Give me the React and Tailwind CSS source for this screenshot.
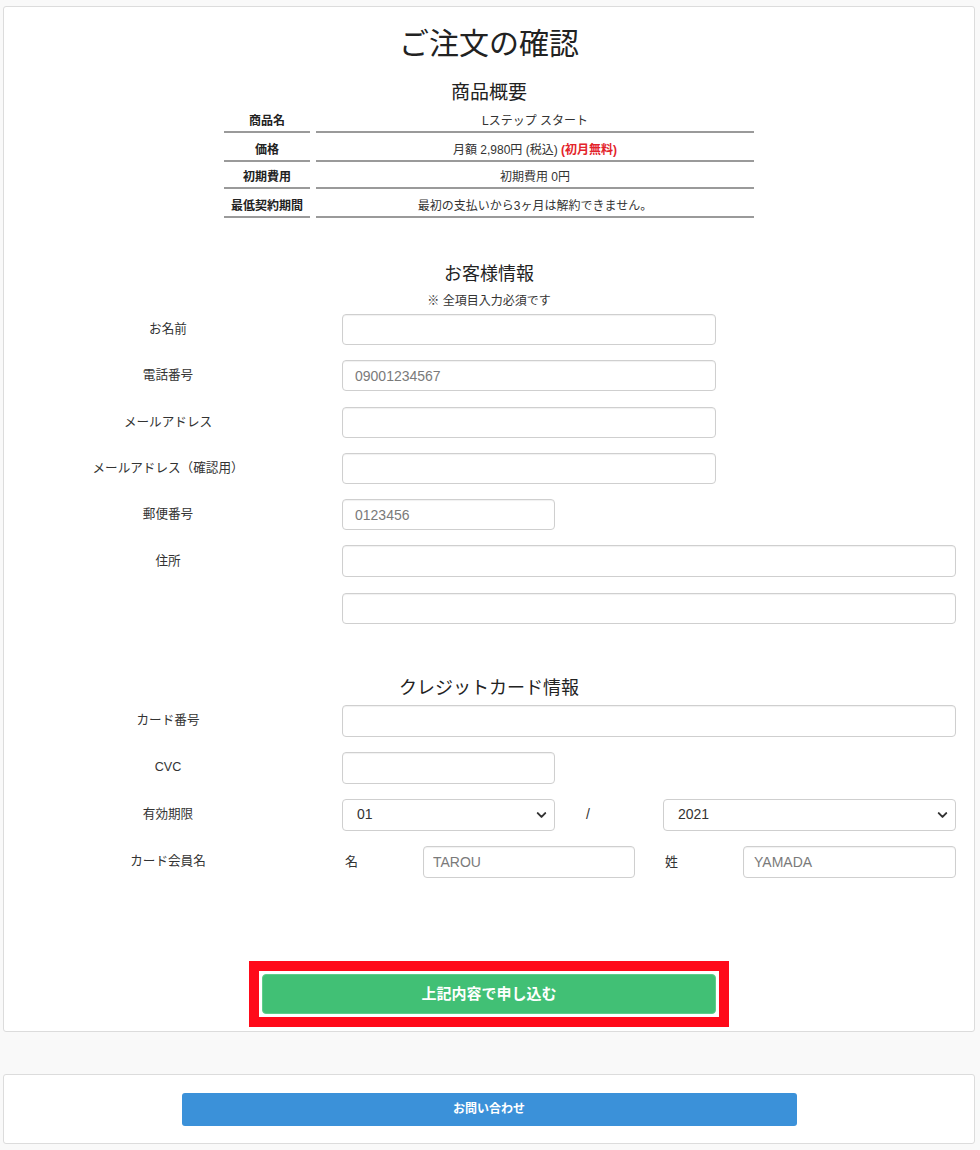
import React from "react"
import { ChevronDown } from "lucide-react"

const font = { fontFamily: '"Liberation Sans", "Noto Sans CJK JP", sans-serif' }

const summary = [
  { label: "商品名", h: "h-[28px]", value: "Lステップ スタート" },
  {
    label: "価格",
    h: "h-[29px]",
    value: (
      <>
        月額 2,980円 (税込) <span className="font-bold text-[#e3242b]">(初月無料)</span>
      </>
    ),
  },
  { label: "初期費用", h: "h-[27px]", value: "初期費用 0円" },
  { label: "最低契約期間", h: "h-[29px]", value: "最初の支払いから3ヶ月は解約できません。" },
]

const inputCls =
  "h-full w-full rounded-[4px] border border-[#cfcfcf] bg-white px-3 text-[14px] text-[#333] placeholder:text-[#7a7a7a] shadow-[inset_0_1px_1px_rgba(0,0,0,0.06)] outline-none"

const Row = ({ label, h = "h-[31px]", children }) => (
  <div className={`flex items-center ${h}`}>
    <div className="w-[328px] text-center text-[12.6px] text-[#333]">{label}</div>
    <div className="ml-[10px] flex h-full w-[614px] items-center">{children}</div>
  </div>
)

const Select = ({ value, w }) => (
  <div className={`relative h-full ${w}`}>
    <select
      defaultValue={value}
      className="h-full w-full appearance-none rounded-[4px] border border-[#cfcfcf] bg-white pl-[14px] text-[14px] text-[#333] outline-none"
    >
      <option>{value}</option>
    </select>
    <ChevronDown
      size={15}
      strokeWidth={3.2}
      className="pointer-events-none absolute right-[6px] top-1/2 -translate-y-1/2 text-[#333]"
    />
  </div>
)

export default function App() {
  return (
    <div className="min-h-[1150px] bg-[#f9f9f9] pt-[6px] pb-[6px]" style={font}>
      <div className="mx-[3px] w-[972px] rounded-[3px] border border-[#dcdcdc] bg-white pt-[19px] pb-[4px]">
        <h1 className="text-center text-[30px] leading-[36px] text-[#222]">ご注文の確認</h1>
        <h2 className="mt-[19px] text-center text-[19px] leading-[24px] text-[#222]">商品概要</h2>

        <div className="mx-auto w-[530px]">
          {summary.map((r) => (
            <div key={r.label} className={`flex gap-[6px] ${r.h}`}>
              <div className="flex w-[86px] items-end justify-center border-b-2 border-[#9a9a9a] pb-[2px] text-[12px] leading-[16px] font-bold text-[#222]">
                {r.label}
              </div>
              <div className="flex flex-1 items-end justify-center border-b-2 border-[#9a9a9a] pb-[2px] text-[12px] leading-[16px] text-[#333]">
                <span>{r.value}</span>
              </div>
            </div>
          ))}
        </div>

        <h2 className="mt-[44px] text-center text-[18px] leading-[24px] text-[#222]">お客様情報</h2>
        <p className="mt-[7px] text-center text-[12px] leading-[16px] text-[#333]">※ 全項目入力必須です</p>

        <div className="mt-[5px] flex flex-col gap-[15.3px]">
          <Row label="お名前">
            <div className="h-full w-[374px]"><input className={inputCls} /></div>
          </Row>
          <Row label="電話番号">
            <div className="h-full w-[374px]"><input className={inputCls} placeholder="09001234567" /></div>
          </Row>
          <Row label="メールアドレス">
            <div className="h-full w-[374px]"><input className={inputCls} /></div>
          </Row>
          <Row label="メールアドレス（確認用）">
            <div className="h-full w-[374px]"><input className={inputCls} /></div>
          </Row>
          <Row label="郵便番号">
            <div className="h-full w-[213px]"><input className={inputCls} placeholder="0123456" /></div>
          </Row>
          <Row label="住所" h="h-[32px]">
            <input className={inputCls} />
          </Row>
          <Row label="" h="h-[31px]">
            <input className={inputCls} />
          </Row>
        </div>

        <h2 className="mt-[52px] text-center text-[18px] leading-[24px] text-[#222]">クレジットカード情報</h2>

        <div className="mt-[5px] flex flex-col gap-[15px]">
          <Row label="カード番号" h="h-[32px]">
            <input className={inputCls} />
          </Row>
          <Row label="CVC" h="h-[32px]">
            <div className="h-full w-[213px]"><input className={inputCls} /></div>
          </Row>
          <Row label="有効期限" h="h-[32px]">
            <Select value="01" w="w-[213px]" />
            <div className="w-[108px] pl-[31px] text-[14px] text-[#333]">/</div>
            <Select value="2021" w="w-[293px]" />
          </Row>
          <Row label="カード会員名" h="h-[32px]">
            <div className="flex h-full w-[293px] items-center">
              <span className="w-[81px] pl-[3px] text-[13px] text-[#333]">名</span>
              <div className="h-full w-[212px]"><input className={`${inputCls} !px-[9px]`} placeholder="TAROU" /></div>
            </div>
            <div className="ml-[28px] flex h-full w-[293px] items-center">
              <span className="w-[80px] pl-[2px] text-[13px] text-[#333]">姓</span>
              <div className="h-full w-[213px]"><input className={`${inputCls} !px-[10px]`} placeholder="YAMADA" /></div>
            </div>
          </Row>
        </div>

        <div className="mx-auto mt-[83px] w-[480px] border-[10px] border-[#ff0a1a] bg-white p-[3px]">
          <button className="flex h-[40px] w-full items-center justify-center rounded-[4px] border border-[#5fce8c] bg-[#41c075] text-[15px] font-bold text-white">
            上記内容で申し込む
          </button>
        </div>
      </div>

      <div className="mx-[3px] mt-[42px] w-[972px] rounded-[3px] border border-[#dcdcdc] bg-white pt-[18px] pb-[17px]">
        <button className="mx-auto flex h-[33px] w-[615px] items-center justify-center rounded-[3px] bg-[#3b91d9] text-[12px] font-bold text-white">
          お問い合わせ
        </button>
      </div>
    </div>
  )
}
